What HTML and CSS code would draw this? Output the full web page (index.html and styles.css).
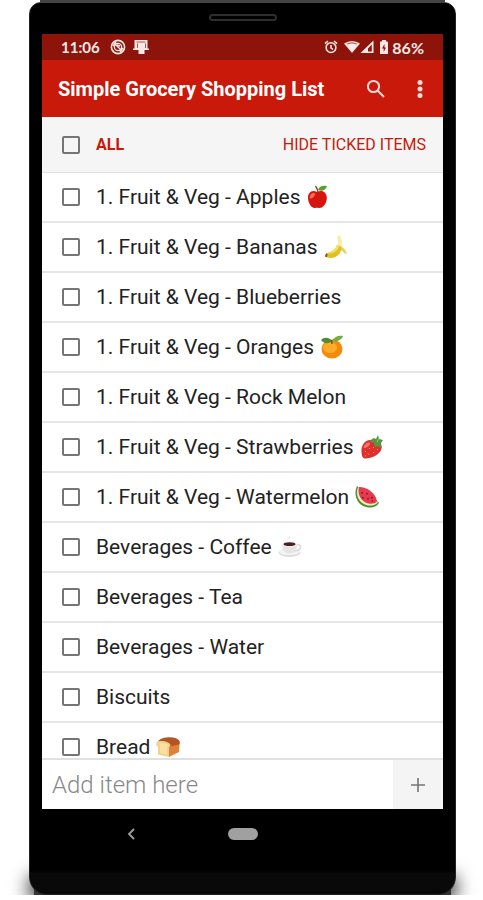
FILE: index.html
```html
<!DOCTYPE html>
<html lang="en">
<head>
    <meta charset="UTF-8">
    <meta name="viewport" content="width=device-width, initial-scale=1.0">
    <title>Simple Grocery Shopping List</title>
    <link rel="stylesheet" href="styles.css">
</head>
<body>

    <div class="phone">
        <div class="speaker"></div>

        <div class="screen">
            <div class="status-bar">
                <span class="time">11:06</span>
                <svg class="status-icon notice" width="16" height="16" viewBox="0 0 16 16" fill="none" stroke="currentColor">
                    <circle cx="8" cy="8" r="6.6" stroke-width="1.6"/>
                    <circle cx="8" cy="8" r="3.6" stroke-width="1.3"/>
                    <path d="M4 4l8 8M3 7l3-4M10 13l3-4M7 6l3 1" stroke-width="1.4"/>
                </svg>
                <svg class="status-icon" width="16" height="16" viewBox="0 0 16 16" fill="currentColor">
                    <path d="M1.500 1h13v8.500H16v1.500h-4.500v4h-6v-4H0V9.500h1.500z"/>
                    <path d="M3.500 3h9M4.500 4.500V9M12.500 4.500V9" stroke="#8c140b" stroke-width="1" opacity=".7"/>
                </svg>
                <div class="status-right">
                    <svg width="14" height="14" viewBox="0 0 14 14" fill="none" stroke="currentColor" stroke-width="1.5">
                        <circle cx="7" cy="7.6" r="4.9"/>
                        <path d="M1 3.6l3-2.6M13 3.6L10 1M7 5v3l2 1.4"/>
                    </svg>
                    <svg class="wifi" width="16" height="14" viewBox="0 0 16 14" fill="currentColor">
                        <path d="M0 3.600Q8-1.800 16 3.600L8 13z"/>
                        <path d="M2.600 3.800Q8 .6 13.400 3.800L12.800 4.600Q8 2.200 3.200 4.600z" fill="#8c140b" opacity=".7"/>
                    </svg>
                    <svg width="14" height="14" viewBox="0 0 14 14" fill="currentColor">
                        <path fill-rule="evenodd" d="M13.500 .5V13H.5zM11.800 4.600L8 8.400V11.500h3.800z"/>
                    </svg>
                    <svg class="battery" width="10" height="14" viewBox="0 0 10 14" fill="currentColor">
                        <path d="M3 0h4v1.500h1.500q.5 0 .5.500v11.500q0 .5-.5.5h-7q-.5 0-.5-.5V2q0-.5.500-.5H3z"/>
                        <path d="M5.500 4L3 8.500h1.700V12L7 7.500H5.500z" fill="#8c140b"/>
                    </svg>
                    <span>86%</span>
                </div>
            </div>

            <header class="app-bar">
                <h1>Simple Grocery Shopping List</h1>
                <button type="button" class="icon-btn" aria-label="Search">
                    <svg width="20" height="20" viewBox="0 0 20 20" fill="none" stroke="currentColor" stroke-width="2">
                        <circle cx="7.500" cy="7.500" r="5.600"/>
                        <path d="M11.800 11.800l6.200 6.200"/>
                    </svg>
                </button>
                <button type="button" class="icon-btn" aria-label="More options">
                    <svg width="6" height="20" viewBox="0 0 6 20" fill="currentColor">
                        <circle cx="3" cy="3.500" r="2.500"/>
                        <circle cx="3" cy="10" r="2.500"/>
                        <circle cx="3" cy="16.500" r="2.500"/>
                    </svg>
                </button>
            </header>

            <div class="toolbar">
                <label class="all"><input type="checkbox" class="tick">ALL</label>
                <button type="button" class="hide-btn">HIDE TICKED ITEMS</button>
            </div>

            <ul class="items">
                <li><label class="item"><input type="checkbox" class="tick"><span>1. Fruit &amp; Veg - Apples</span>
                    <svg class="food" viewBox="0 0 24 24">
                        <path d="M11 7C6 4 1.500 8 2 13.500 2.500 19 6 23.500 9 23c1.500-.3 2.500-.3 4 0 4 .5 8-5 7.800-10.500C20.500 7 16 4.500 11 7z" fill="#d8140e"/>
                        <path d="M4 11c1-3.500 4-3.500 5-2.500s-2 5-4 5S3.800 12 4 11z" fill="#fa6a55"/>
                        <path d="M12 8c0-3-1-5-2.500-7" fill="none" stroke="#70462b" stroke-width="1.300"/>
                        <path d="M12 5c1-4 5-5 9-4-1 4-5 6-9 4z" fill="#5c9e31"/>
                    </svg></label></li>
                <li><label class="item"><input type="checkbox" class="tick"><span>1. Fruit &amp; Veg - Bananas</span>
                    <svg class="food" viewBox="0 0 24 24">
                        <path d="M13 1l3-.5c2 4 2.500 8 1.500 13l-4.500 1c1-4 1.500-9 0-13.500z" fill="#f8eda5"/>
                        <path d="M16 11c3 1 6 4 7 8l-2-.5c-2-2.500-4-3-6-4z" fill="#e6d15f"/>
                        <path d="M13 10c-1 4-5 7-11 8.500l-1 3c5 3 12 1 15-3.500 1-2 1.500-4 1-6z" fill="#e3bf22"/>
                        <path d="M13 10c-1 4-5 7-11 8.500 6 .5 11-1.500 13-6.500z" fill="#f7df65"/>
                        <path d="M2 18.500l-1 3 2 .5.500-3z" fill="#6d5324"/>
                    </svg></label></li>
                <li><label class="item"><input type="checkbox" class="tick"><span>1. Fruit &amp; Veg - Blueberries</span></label></li>
                <li><label class="item"><input type="checkbox" class="tick"><span>1. Fruit &amp; Veg - Oranges</span>
                    <svg class="food" viewBox="0 0 24 24">
                        <ellipse cx="12" cy="14" rx="10.500" ry="9.500" fill="#f28a0e"/>
                        <ellipse cx="10" cy="12.500" rx="7" ry="5.500" fill="#ffab26"/>
                        <path d="M12 6C9 9 4 9 1 5c3-3 8-3 11 1z" fill="#4c8c35"/>
                        <path d="M12 6c2-4 6-6 11-5-1 4-6 6-11 5z" fill="#77ac40"/>
                        <path d="M12 9l-.5-4" stroke="#55612a" stroke-width="1.500"/>
                    </svg></label></li>
                <li><label class="item"><input type="checkbox" class="tick"><span>1. Fruit &amp; Veg - Rock Melon</span></label></li>
                <li><label class="item"><input type="checkbox" class="tick"><span>1. Fruit &amp; Veg - Strawberries</span>
                    <svg class="food" viewBox="0 0 24 24">
                        <path d="M10 5C5 5 1 10 1.500 17c.3 4 1 6.500 4 6.500 6 0 15-4 16-10C22 8 16 4.500 10 5z" fill="#df302d"/>
                        <path d="M4 11c2-4 5-4 6-3s-3 5-5 5-1.500-1-1-2z" fill="#fa7367"/>
                        <path d="M5 16l1 1M9 13l1 1M8 18.500l1 1M13 12l1 1M13 17l1 1M17 14l1 1M5 20.500l1 .5" stroke="#ffb48a" stroke-width="1"/>
                        <path d="M9 6l5-3 2 1 2-4 1 4 4 1-2 3 1 5-4-2-3 1-1-4z" fill="#579641"/>
                        <path d="M17 7l2-4" stroke="#8cc15b" stroke-width="1.300"/>
                    </svg></label></li>
                <li><label class="item"><input type="checkbox" class="tick"><span>1. Fruit &amp; Veg - Watermelon</span>
                    <svg class="food" viewBox="0 0 24 24">
                        <path d="M2 1C-2 10 2 21 13 22.500c5 .5 10-1.500 11-5z" fill="#4e8e36"/>
                        <path d="M3 2C0 10 4 19 13 20.500c4 .5 8-.5 10-3.500z" fill="#f1efbd"/>
                        <path d="M4 2c-2 7 2 15 9.500 16.500 3 .5 7 0 8.500-2C21 9 13 2 4 2z" fill="#e83950"/>
                        <path d="M7 7v1.500M12 8v1.500M8 12v1.500M13 13v1.500M17 12v1.500M17 16h1" stroke="#512026" stroke-width="1.400"/>
                    </svg></label></li>
                <li><label class="item"><input type="checkbox" class="tick"><span>Beverages - Coffee</span>
                    <svg class="food" viewBox="0 0 24 24">
                        <ellipse cx="11.500" cy="17.500" rx="11" ry="4.500" fill="#dedede"/>
                        <ellipse cx="11.500" cy="16.500" rx="10.500" ry="3.500" fill="#f4f4f4"/>
                        <path d="M18 10c7-2 6 6-2 6" fill="none" stroke="#dcdcdc" stroke-width="1.600"/>
                        <path d="M4 9h15c0 6-2.500 9.500-7.500 9.500S4 15 4 9z" fill="#e5e5e5"/>
                        <ellipse cx="11.500" cy="9" rx="7.500" ry="2.800" fill="#f6f6f6"/>
                        <ellipse cx="11.500" cy="9.200" rx="6" ry="1.900" fill="#47201f"/>
                        <path d="M10 5c-1-2 3-2 1-4" fill="none" stroke="#ededed" stroke-width="1.500"/>
                    </svg></label></li>
                <li><label class="item"><input type="checkbox" class="tick"><span>Beverages - Tea</span></label></li>
                <li><label class="item"><input type="checkbox" class="tick"><span>Beverages - Water</span></label></li>
                <li><label class="item"><input type="checkbox" class="tick"><span>Biscuits</span></label></li>
                <li><label class="item"><input type="checkbox" class="tick"><span>Bread</span>
                    <svg class="food" viewBox="0 0 24 24">
                        <path d="M2 7c3-4 9-4 14-4 6 0 9 3 7.500 6.500L23 17l-10 5-5-9z" fill="#df8138"/>
                        <path d="M2 6c4-3.500 9-4 14-3.500 5 0 9 3.500 7 7l-9 2z" fill="#b65524"/>
                        <path d="M1 7c4-2.500 13 0 13.500 3 .2 1.500-1.500 2-1.500 2.500V22L2 19.500V12C0 11-.5 8 1 7z" fill="#f2d289"/>
                        <path d="M3 8.500c3-1 9 .5 9.500 2l-1.500 1.500v7.500l-7-1.500v-7z" fill="#f9e0a2"/>
                    </svg></label></li>
            </ul>

            <form class="add-bar">
                <input type="text" class="add-input" placeholder="Add item here" aria-label="Add item here">
                <button type="button" class="add-btn" aria-label="Add">
                    <svg width="14" height="14" viewBox="0 0 14 14" stroke="currentColor" stroke-width="1.600">
                        <path d="M7 0v14M0 7h14"/>
                    </svg>
                </button>
            </form>
        </div>

        <nav class="nav-bar">
            <button type="button" class="nav-btn" aria-label="Back">
                <svg width="8" height="12" viewBox="0 0 8 12" fill="none" stroke="currentColor" stroke-width="1.800">
                    <path d="M7 1L2 6l5 5"/>
                </svg>
            </button>
            <button type="button" class="home-btn" aria-label="Home"></button>
            <span></span>
        </nav>
    </div>

</body>
</html>
```

FILE: styles.css
```css
* {
    margin: 0;
    padding: 0;
    box-sizing: border-box;
}

body {
    height: 100vh;
    padding: 2px 27px 5px 29px;
    background-color: #fff;
    font-family: Roboto, Arial, sans-serif;
    overflow: hidden;
}

button {
    border: none;
    background: none;
    font-family: inherit;
    cursor: pointer;
}

svg {
    display: block;
    flex-shrink: 0;
}

/* Phone body */
.phone {
    position: relative;
    display: flex;
    flex-direction: column;
    height: 100%;
    padding: 0 12px;
    background: linear-gradient(#000 868px, #090909 870px);
    border: 1px solid #222;
    border-radius: 12px 12px 18px 18px;
}

/* Top edge */
.phone::before {
    content: "";
    position: absolute;
    top: -3px;
    left: 10px;
    right: 10px;
    height: 3px;
    background-color: #444;
}

/* Shadow on the ground */
.phone::after {
    content: "";
    position: absolute;
    z-index: -1;
    left: 4px;
    right: 4px;
    bottom: -1px;
    height: 14px;
    background-color: #333;
    box-shadow: 0 0 18px 5px #333;
    clip-path: inset(-40px -40px 0 -40px);
}

.speaker {
    width: 68px;
    height: 7px;
    margin: 11px auto 13px;
    border: 2px solid #2e2e2e;
    border-radius: 4px;
    flex-shrink: 0;
}

.screen {
    display: flex;
    flex-direction: column;
    flex: 1;
    min-height: 0;
    background-color: #fff;
}

/* Status bar */
.status-bar {
    display: flex;
    align-items: center;
    height: 26px;
    padding: 0 19px;
    background-color: #8c140b;
    color: #fbe9e7;
    font-family: Lato, Arial, sans-serif;
    font-size: 16px;
    font-weight: bold;
}

.time {
    font-size: 15px;
}

.status-icon {
    margin-left: 7px;
}

.notice {
    margin-left: 10px;
}

.status-right {
    display: flex;
    align-items: center;
    margin-left: auto;
}

.wifi {
    margin-left: 6px;
}

.battery {
    margin: 0 3px 0 5px;
}

/* App bar */
.app-bar {
    display: flex;
    align-items: center;
    height: 57px;
    padding: 0 8px 0 16px;
    background-color: #c8190b;
    color: #fff;
}

h1 {
    flex: 1;
    font-size: 20px;
    font-weight: 700;
    white-space: nowrap;
}

.icon-btn {
    display: flex;
    align-items: center;
    justify-content: center;
    width: 30px;
    height: 40px;
    color: #fbdcd8;
}

.icon-btn + .icon-btn {
    margin-left: 14px;
}

/* Select all and hide */
.toolbar {
    display: flex;
    align-items: center;
    justify-content: space-between;
    height: 56px;
    padding: 0 17px 0 20px;
    background-color: #f5f5f5;
    border-bottom: 1px solid #e0e0e0;
    color: #c8190b;
}

.all {
    display: flex;
    align-items: center;
    gap: 16px;
    font-size: 16px;
    font-weight: 700;
}

.hide-btn {
    color: #c8190b;
    font-size: 16px;
}

.tick {
    appearance: none;
    width: 18px;
    height: 18px;
    flex-shrink: 0;
    border: 2px solid #757575;
    border-radius: 2px;
}

.tick:checked {
    background-color: #c8190b;
    border-color: #c8190b;
}

/* Grocery items */
.items {
    flex: 1;
    min-height: 0;
    overflow: hidden;
    list-style: none;
}

.item {
    display: flex;
    align-items: center;
    height: 50px;
    padding: 0 20px;
    border-bottom: 2px solid #e6e6e6;
    color: #222;
    font-size: 21px;
    white-space: nowrap;
}

.item .tick {
    margin-right: 16px;
}

.food {
    width: 24px;
    height: 24px;
    margin-left: 6px;
}

/* Add item */
.add-bar {
    display: flex;
    height: 51px;
    border-top: 2px solid #e0e0e0;
}

.add-input {
    flex: 1;
    min-width: 0;
    padding: 0 10px;
    border: none;
    outline: none;
    font-family: inherit;
    font-size: 24px;
    font-weight: 300;
}

.add-input::placeholder {
    color: #888;
}

.add-btn {
    display: flex;
    align-items: center;
    justify-content: center;
    width: 50px;
    background-color: #f4f4f4;
    color: #757575;
}

/* Navigation */
.nav-bar {
    display: flex;
    align-items: center;
    justify-content: space-between;
    height: 85px;
    padding: 0 85px 36px;
}

.nav-bar span {
    width: 8px;
}

.nav-btn {
    color: #a0a0a0;
}

.home-btn {
    width: 30px;
    height: 12px;
    background-color: #a0a0a0;
    border-radius: 6px;
}
```
